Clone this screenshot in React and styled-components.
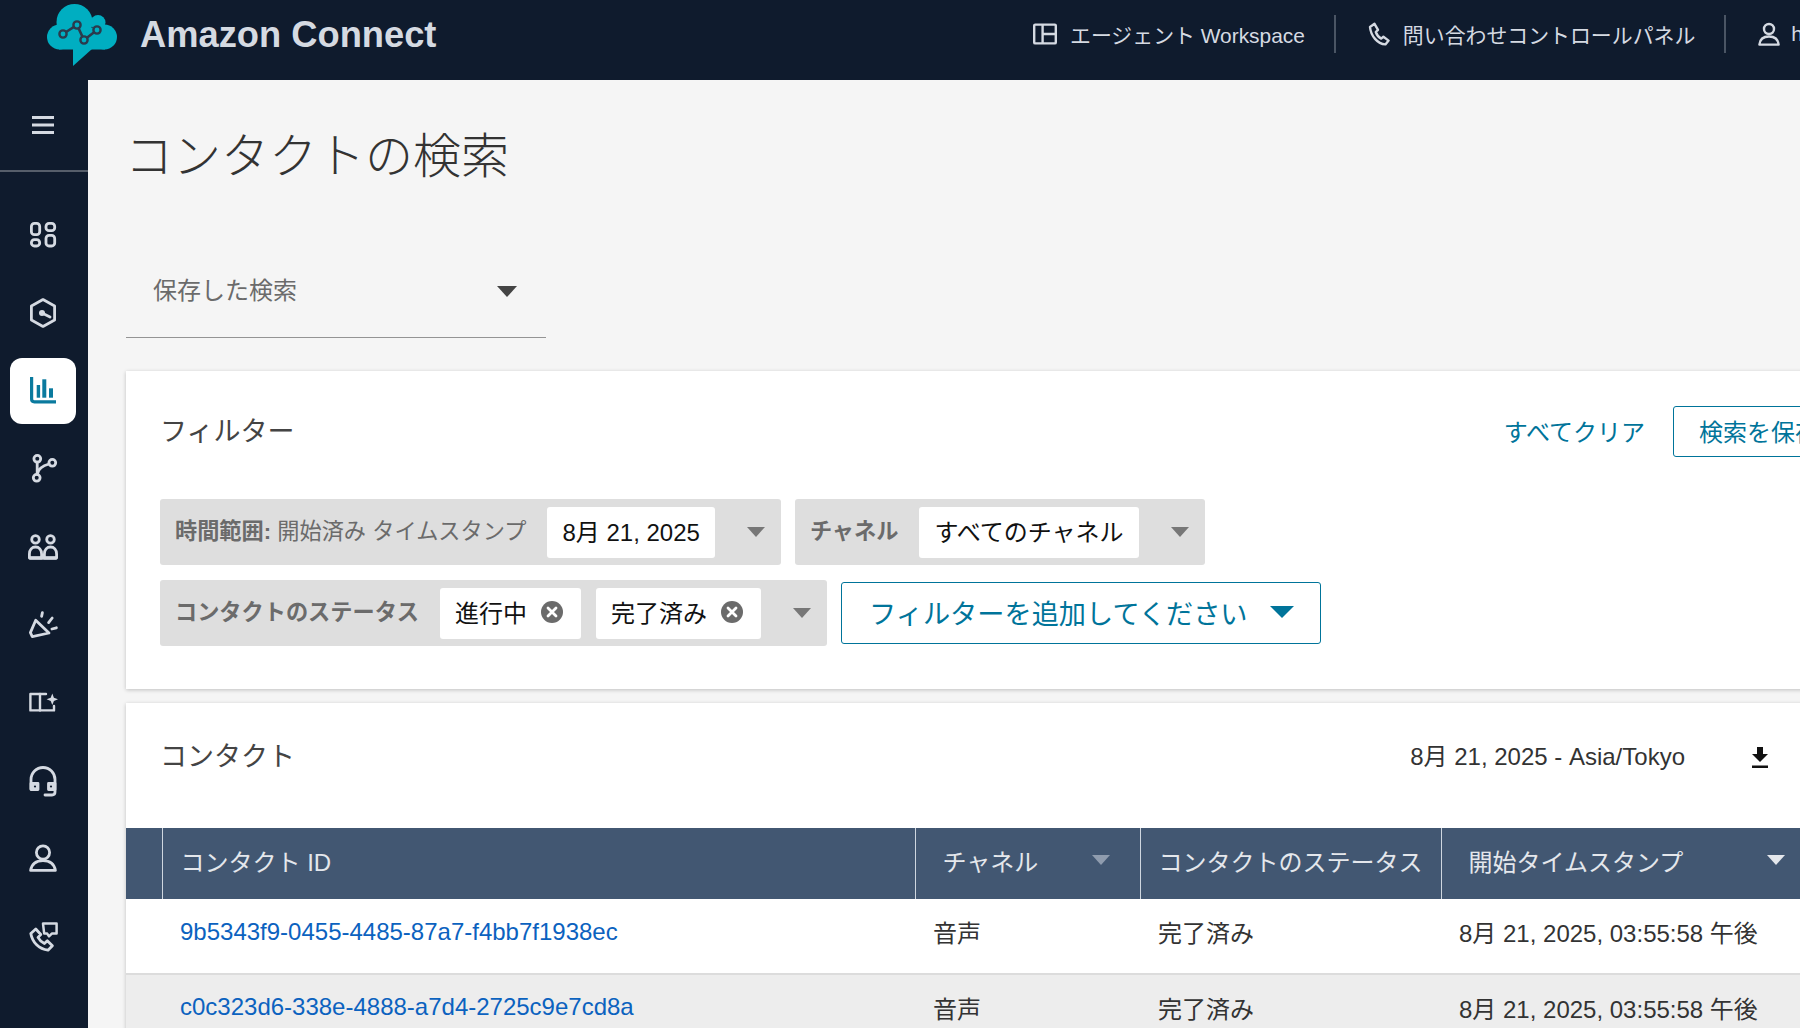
import React from "react";
import styled, { createGlobalStyle } from "styled-components";

const GlobalStyle = createGlobalStyle`
  html, body {
    margin: 0;
    padding: 0;
    background: #f5f5f5;
    overflow: hidden;
  }
  * {
    box-sizing: border-box;
  }
`;

const FONT = `"Liberation Sans", "Noto Sans CJK JP", sans-serif`;
const TEAL = "#00749a";

const Page = styled.div`
  width: 1800px;
  height: 1028px;
  overflow: hidden;
  display: flex;
  flex-direction: column;
  font-family: ${FONT};
  color: #333;
`;

const TopBar = styled.header`
  height: 80px;
  flex: none;
  background: #0f1b2d;
  display: flex;
  align-items: center;
  padding-left: 47px;
  color: #d5dae2;
`;

const Brand = styled.div`
  font-size: 36.3px;
  font-weight: 700;
  margin-left: 23px;
  margin-top: -10px;
  white-space: nowrap;
`;

const TopNav = styled.nav`
  margin-left: auto;
  display: flex;
  align-items: center;
  margin-top: -12px;
  width: 798px;
  flex: none;
  overflow: hidden;
`;

const TopLink = styled.div`
  display: flex;
  align-items: center;
  gap: ${(p) => p.$gap || 13}px;
  font-size: 20.9px;
  white-space: nowrap;
  height: 38px;
  padding: 0 29px 0 31px;
  border-right: ${(p) => (p.$last ? "none" : "2px solid #4a5564")};
`;

const Body = styled.div`
  flex: 1;
  display: flex;
  min-height: 0;
`;

const Sidebar = styled.aside`
  width: 88px;
  flex: none;
  background: #0f1b2d;
  display: flex;
  flex-direction: column;
  color: #d5dae2;
`;

const Burger = styled.div`
  height: 92px;
  flex: none;
  border-bottom: 2px solid #565e6a;
  display: flex;
  align-items: center;
  justify-content: center;
  padding: 0 2px 1px 0;
  margin-bottom: 30px;
`;

const NavItem = styled.div`
  width: 66px;
  height: 66px;
  margin: 0 0 12px 10px;
  flex: none;
  border-radius: 12px;
  display: flex;
  align-items: center;
  justify-content: center;
  background: ${(p) => (p.$active ? "#fff" : "transparent")};
  color: ${(p) => (p.$active ? "#0a7a9e" : "#d5dae2")};
`;

const Main = styled.main`
  flex: 1;
  min-width: 0;
  padding: 0 0 0 38px;
`;

const Title = styled.h1`
  margin: 0 0 0 -1px;
  height: 143px;
  padding-top: 47px;
  font-size: 48px;
  line-height: 60px;
  font-weight: 300;
  color: #333;
`;

const SavedSearch = styled.div`
  width: 420px;
  height: 115px;
  border-bottom: 1px solid #949494;
  display: flex;
  align-items: center;
  justify-content: space-between;
  padding: 16px 29px 0 27px;
  font-size: 24px;
  color: #6b6b6b;
`;

const Arrow = styled.span`
  flex: none;
  width: 0;
  height: 0;
  border-left: ${(p) => p.$w || 9}px solid transparent;
  border-right: ${(p) => p.$w || 9}px solid transparent;
  border-top: ${(p) => p.$h || 10}px solid ${(p) => p.$color || "#777"};
`;

const SavedArrow = styled(Arrow)`
  margin-top: 6px;
`;

const Card = styled.section`
  width: 1800px;
  background: #fff;
  box-shadow: 0 1px 4px rgba(0, 0, 0, 0.22);
`;

const FilterCard = styled(Card)`
  height: 318px;
  margin: 33px 0 14px;
  padding: 35px 0 0 34px;
`;

const CardHead = styled.div`
  display: flex;
  align-items: center;
  height: 51px;
  width: 1733px;
`;

const CardTitle = styled.h2`
  margin: 0 0 5px;
  font-size: 27px;
  font-weight: 400;
  color: #444;
`;

const ClearLink = styled.a`
  margin: 0 0 2px auto;
  font-size: 24px;
  color: ${TEAL};
`;

const SaveButton = styled.button`
  font: inherit;
  font-size: 24px;
  color: ${TEAL};
  background: #fff;
  border: 1.5px solid ${TEAL};
  border-radius: 3px;
  height: 51px;
  width: 220px;
  flex: none;
  margin-left: 28px;
  padding: 0 0 2px 25px;
  text-align: left;
  white-space: nowrap;
`;

const FilterRows = styled.div`
  margin-top: 42px;
  display: flex;
  flex-direction: column;
  gap: 15px;
`;

const FilterRow = styled.div`
  display: flex;
  align-items: center;
  gap: 14px;
`;

const Chip = styled.div`
  height: 66px;
  background: #dedede;
  border-radius: 3px;
  display: flex;
  align-items: center;
  padding: 0 16px 0 15px;
`;

const ChipLabel = styled.span`
  font-size: 22.2px;
  font-weight: 700;
  color: #6b6b6b;
  white-space: nowrap;
  padding-bottom: 6px;
  span {
    font-weight: 400;
  }
`;

const ChipValue = styled.span`
  height: 51px;
  margin-left: ${(p) => p.$gap || 21}px;
  padding: 0 15px 3px;
  background: #fff;
  border-radius: 3px;
  display: flex;
  align-items: center;
  gap: 11px;
  font-size: 24px;
  color: #111;
  white-space: nowrap;
`;

const RemovableValue = styled(ChipValue)`
  gap: 14px;
  padding-right: 18px;
`;

const ChipArrow = styled.span`
  display: flex;
  margin-left: 32px;
`;

const AddFilter = styled.button`
  font: inherit;
  width: 480px;
  height: 62px;
  background: #fff;
  border: 1.5px solid ${TEAL};
  border-radius: 3px;
  color: ${TEAL};
  font-size: 27.2px;
  display: flex;
  align-items: center;
  justify-content: space-between;
  padding: 0 26px 2px 27px;
  white-space: nowrap;
`;

const ContactsCard = styled(Card)`
  height: 400px;
`;

const ContactsHead = styled.div`
  height: 125px;
  width: 1643px;
  display: flex;
  align-items: center;
  padding: 0 0 17px 34px;
`;

const RangeText = styled.span`
  margin: 0 0 5px auto;
  font-size: 24px;
  color: #333;
`;

const DownloadBtn = styled.span`
  display: flex;
  margin-left: 66px;
  color: #111;
`;

const Table = styled.table`
  border-collapse: collapse;
  table-layout: fixed;
  width: 1800px;
`;

const HeadCell = styled.th`
  height: 71px;
  padding: 0 0 7px ${(p) => p.$pad || 18}px;
  background: #425772;
  color: #e4e7ec;
  font-size: 24px;
  font-weight: 400;
  text-align: left;
  border-right: 1px solid #cfd6df;
  white-space: nowrap;
`;

const HeadInner = styled.div`
  display: flex;
  align-items: center;
  justify-content: space-between;
  width: ${(p) => p.$w}px;
`;

const Cell = styled.td`
  height: 75px;
  padding: 0 0 9px 18px;
  font-size: 24px;
  color: #333;
  white-space: nowrap;
  background: ${(p) => (p.$alt ? "#ededed" : "#fff")};
  border-bottom: 2px solid #dcdcdc;
`;

const IdLink = styled.a`
  color: #0b62bf;
`;

const Icon = ({ children }) => (
  <svg width="32" height="32" viewBox="0 0 32 32" fill="none" stroke="currentColor" strokeWidth="2.8" strokeLinecap="round" strokeLinejoin="round">
    {children}
  </svg>
);

const TopIcon = ({ width = 24, height = 24, children }) => (
  <svg width={width} height={height} viewBox={`0 0 ${width} ${height}`} fill="none" stroke="currentColor" strokeWidth="2.4" strokeLinejoin="round" style={{ flex: "none" }}>
    {children}
  </svg>
);

const Logo = () => (
  <svg width="70" height="62" viewBox="47 4 70 62" style={{ marginTop: -10, flex: "none" }}>
    <g fill="#00aec1">
      <circle cx="59.5" cy="37" r="12.5" />
      <circle cx="74.5" cy="22" r="18" />
      <circle cx="98" cy="22.5" r="7.5" />
      <circle cx="104.5" cy="37" r="12.5" />
      <rect x="59" y="28" width="46" height="21.5" />
      <path d="M73 49 V66 L92 49 Z" />
    </g>
    <path d="M63 34 L77 25 L84 40 L97 30" fill="none" stroke="#2b3a4c" strokeWidth="2.6" />
    {[[63, 34], [77, 25], [84, 40], [97, 30]].map(([x, y]) => (
      <circle key={x} cx={x} cy={y} r="3.6" fill="#00aec1" stroke="#2b3a4c" strokeWidth="2.4" />
    ))}
  </svg>
);

const navIcons = [
  <Icon key="grid">
    <rect x="4.4" y="4.4" width="8.3" height="11.3" rx="3" />
    <rect x="19" y="4.4" width="8.7" height="7.3" rx="3" />
    <rect x="4.4" y="20.7" width="8.3" height="6.3" rx="3" />
    <rect x="19" y="16.4" width="8.7" height="10.6" rx="3" />
  </Icon>,
  <Icon key="gauge">
    <path d="M16 2.6 L27.6 9 V23 L16 29.4 L4.4 23 V9 Z" />
    <circle cx="15" cy="16" r="3" fill="currentColor" stroke="none" />
    <path d="M15 16 L23 20" />
  </Icon>,
  <Icon key="chart">
    <path d="M4.6 2 V24 Q4.6 26.8 7.4 26.8 H29" strokeWidth="3.2" strokeLinecap="butt" />
    <g fill="currentColor" stroke="none">
      <rect x="9.7" y="10" width="3.4" height="12.7" />
      <rect x="15.3" y="4.3" width="4" height="18.4" />
      <rect x="22" y="13.3" width="4" height="9.4" />
    </g>
  </Icon>,
  <Icon key="flow">
    <circle cx="10.3" cy="5.8" r="3.4" />
    <circle cx="9.7" cy="24.8" r="3.4" />
    <circle cx="25.3" cy="9.8" r="3.4" />
    <path d="M10.2 9.2 V21.4 M22 11 C16 12.5 11.5 15 10.4 21" />
  </Icon>,
  <Icon key="group">
    <circle cx="8.5" cy="8.4" r="3.8" />
    <circle cx="23.5" cy="8.4" r="3.8" />
    <path d="M2.4 27 V23 C2.4 18.8 5 16 8.5 16 C12 16 14.6 18.8 14.6 23 V27 Z" />
    <path d="M17.4 27 V23 C17.4 18.8 20 16 23.5 16 C27 16 29.6 18.8 29.6 23 V27 Z" />
    <path d="M2.4 27 H29.6" strokeWidth="3.4" strokeLinecap="butt" />
  </Icon>,
  <Icon key="campaign">
    <path d="M8.7 11.3 L22 24 L5.3 27.6 L3.4 23.6 Z" />
    <path d="M15.4 3.6 L14.6 7.4 M25.2 9 L21.6 13.6 M29.4 18.8 L24.9 20" />
  </Icon>,
  <Icon key="book">
    <path d="M13 7 H3.4 V23.4 H13 Z" strokeWidth="2.4" />
    <path d="M13 7 H19 M13 23.4 H27 V19" strokeWidth="2.4" />
    <path d="M25.3 6.6 L26.9 10.7 L31 12.3 L26.9 13.9 L25.3 18 L23.7 13.9 L19.6 12.3 L23.7 10.7 Z" fill="currentColor" stroke="none" />
  </Icon>,
  <Icon key="headset">
    <path d="M4 24 V14.5 A12 12 0 0 1 28 14.5 V27 Q28 30 25 30 H18" />
    <path d="M4 18.5 H11 V24.5 H4 Z M28 18.5 H21.5 V24.5 H28 Z" fill="currentColor" />
    <circle cx="8" cy="21.5" r="1.1" fill="#0f1b2d" stroke="none" />
    <circle cx="24" cy="21.5" r="1.1" fill="#0f1b2d" stroke="none" />
  </Icon>,
  <Icon key="person">
    <circle cx="16" cy="9.5" r="6.6" />
    <path d="M3.6 27.4 C4.8 20.5 9.5 17.6 16 17.6 C22.5 17.6 27.2 20.5 28.4 27.4 Z" />
  </Icon>,
  <Icon key="phonechat">
    <path d="M3.8 12.5 L8.8 8 L13.8 13.5 L11 16.4 C12.5 19.2 14.5 21.2 17.4 22.6 L20.3 19.8 L25.4 24.8 L21 29.2 C12 28.2 5.4 21.5 3.8 12.5 Z" />
    <path d="M16 2.6 H29.6 V12.6 H24.8 L22 15.4 L20.2 12.6 H17.2 Z" strokeWidth="2.5" />
  </Icon>,
];

const ClearIcon = () => (
  <svg width="22" height="22" viewBox="0 0 22 22">
    <circle cx="11" cy="11" r="11" fill="#6b6b6b" />
    <path d="M7 7 L15 15 M15 7 L7 15" stroke="#fff" strokeWidth="2.8" strokeLinecap="round" />
  </svg>
);

const rows = [
  { id: "9b5343f9-0455-4485-87a7-f4bb7f1938ec" },
  { id: "c0c323d6-338e-4888-a7d4-2725c9e7cd8a", alt: true },
];

export default function App() {
  return (
    <Page>
      <GlobalStyle />
      <TopBar>
        <Logo />
        <Brand>Amazon Connect</Brand>
        <TopNav>
          <TopLink>
            <TopIcon width={24} height={22}>
              <rect x="1.2" y="1.6" width="21.6" height="18.8" rx="1" />
              <path d="M9.6 1.6 V20.4 M9.6 11 H22.8" />
            </TopIcon>
            エージェント Workspace
          </TopLink>
          <TopLink $gap={12}>
            <TopIcon>
              <path d="M3 5 L7.5 1.8 L11 7.8 L8.8 10 C9.8 13 11.8 15.4 14.2 16.6 L16.4 14.8 L21.6 18.6 L18.4 22.4 C10.5 21.8 3.8 14 3 5 Z" />
            </TopIcon>
            問い合わせコントロールパネル
          </TopLink>
          <TopLink $last $gap={10}>
            <TopIcon>
              <circle cx="12" cy="7" r="5" />
              <path d="M2.4 22.6 C3 16.5 7 14.5 12 14.5 C17 14.5 21 16.5 21.6 22.6 Z" />
            </TopIcon>
            h
          </TopLink>
        </TopNav>
      </TopBar>
      <Body>
        <Sidebar>
          <Burger>
            <svg width="22" height="18" viewBox="0 0 22 18">
              <path d="M0 1.5 H22 M0 9 H22 M0 16.5 H22" stroke="currentColor" strokeWidth="2.8" />
            </svg>
          </Burger>
          {navIcons.map((icon, i) => (
            <NavItem key={i} $active={i === 2}>
              {icon}
            </NavItem>
          ))}
        </Sidebar>
        <Main>
          <Title>コンタクトの検索</Title>
          <SavedSearch>
            保存した検索
            <SavedArrow $w={10} $h={11} $color="#444" />
          </SavedSearch>
          <FilterCard>
            <CardHead>
              <CardTitle>フィルター</CardTitle>
              <ClearLink>すべてクリア</ClearLink>
              <SaveButton>検索を保存</SaveButton>
            </CardHead>
            <FilterRows>
              <FilterRow>
                <Chip>
                  <ChipLabel>
                    時間範囲: <span>開始済み タイムスタンプ</span>
                  </ChipLabel>
                  <ChipValue>8月 21, 2025</ChipValue>
                  <ChipArrow>
                    <Arrow />
                  </ChipArrow>
                </Chip>
                <Chip>
                  <ChipLabel>チャネル</ChipLabel>
                  <ChipValue>すべてのチャネル</ChipValue>
                  <ChipArrow>
                    <Arrow />
                  </ChipArrow>
                </Chip>
              </FilterRow>
              <FilterRow>
                <Chip>
                  <ChipLabel>コンタクトのステータス</ChipLabel>
                  <RemovableValue>
                    進行中
                    <ClearIcon />
                  </RemovableValue>
                  <RemovableValue $gap={15}>
                    完了済み
                    <ClearIcon />
                  </RemovableValue>
                  <ChipArrow>
                    <Arrow />
                  </ChipArrow>
                </Chip>
                <AddFilter>
                  フィルターを追加してください
                  <Arrow $w={12} $h={12} $color={TEAL} />
                </AddFilter>
              </FilterRow>
            </FilterRows>
          </FilterCard>
          <ContactsCard>
            <ContactsHead>
              <CardTitle>コンタクト</CardTitle>
              <RangeText>8月 21, 2025 - Asia/Tokyo</RangeText>
              <DownloadBtn>
                <svg width="18" height="21" viewBox="0 0 18 21" fill="currentColor">
                  <path d="M6 0 H12 V7 H17 L9 15 L1 7 H6 Z" />
                  <rect x="1" y="18.5" width="16" height="2.5" />
                </svg>
              </DownloadBtn>
            </ContactsHead>
            <Table>
              <colgroup>
                <col style={{ width: 36 }} />
                <col style={{ width: 753 }} />
                <col style={{ width: 225 }} />
                <col style={{ width: 301 }} />
                <col style={{ width: 485 }} />
              </colgroup>
              <thead>
                <tr>
                  <HeadCell />
                  <HeadCell>コンタクト ID</HeadCell>
                  <HeadCell $pad={27}>
                    <HeadInner $w={167}>
                      チャネル
                      <Arrow $color="#8f9cae" />
                    </HeadInner>
                  </HeadCell>
                  <HeadCell>コンタクトのステータス</HeadCell>
                  <HeadCell $pad={27}>
                    <HeadInner $w={316}>
                      開始タイムスタンプ
                      <Arrow $color="#e4e7ec" />
                    </HeadInner>
                  </HeadCell>
                </tr>
              </thead>
              <tbody>
                {rows.map((row) => (
                  <tr key={row.id}>
                    <Cell $alt={row.alt} />
                    <Cell $alt={row.alt}>
                      <IdLink>{row.id}</IdLink>
                    </Cell>
                    <Cell $alt={row.alt}>音声</Cell>
                    <Cell $alt={row.alt}>完了済み</Cell>
                    <Cell $alt={row.alt}>8月 21, 2025, 03:55:58 午後</Cell>
                  </tr>
                ))}
              </tbody>
            </Table>
          </ContactsCard>
        </Main>
      </Body>
    </Page>
  );
}
